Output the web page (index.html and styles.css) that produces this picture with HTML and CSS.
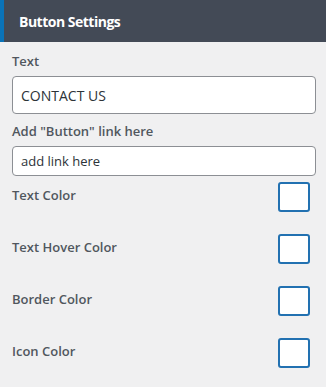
FILE: index.html
```html
<!DOCTYPE html>
<html lang="en">
<head>
    <meta charset="UTF-8">
    <meta name="viewport" content="width=device-width, initial-scale=1.0">
    <title>Button Settings</title>
    <link rel="stylesheet" href="styles.css">
</head>
<body>
    <div class="panel">
        <div class="panel-header">Button Settings</div>
        <div class="panel-body">
            <div class="field">
                <label class="field-label" for="btnText">Text</label>
                <input class="text-input big" type="text" id="btnText" value="CONTACT US">
            </div>
            <div class="field">
                <label class="field-label" for="btnLink">Add "Button" link here</label>
                <input class="text-input" type="text" id="btnLink" placeholder="add link here">
            </div>
            <div class="color-row">
                <span class="field-label">Text Color</span>
                <button class="swatch"></button>
            </div>
            <div class="color-row">
                <span class="field-label">Text Hover Color</span>
                <button class="swatch"></button>
            </div>
            <div class="color-row">
                <span class="field-label">Border Color</span>
                <button class="swatch"></button>
            </div>
            <div class="color-row">
                <span class="field-label">Icon Color</span>
                <button class="swatch"></button>
            </div>
        </div>
    </div>
</body>
</html>
```

FILE: styles.css
```css
body {
    margin: 0;
    font-family: "Open Sans", "Noto Sans", sans-serif;
    background: #f0f0f1;
    color: #50575e;
}
.panel {
    width: 326px;
}
.panel-header {
    height: 42px;
    box-sizing: border-box;
    display: flex;
    align-items: center;
    padding-left: 15px;
    background: #434a56;
    border-left: 4px solid #0a73b8;
    color: #fff;
    font-size: 14px;
    font-weight: 700;
    letter-spacing: -0.5px;
}
.panel-body {
    padding: 10px 10px 0 12px;
}
.field {
    display: flex;
    flex-direction: column;
    margin-bottom: 8px;
}
.field-label {
    font-size: 13px;
    font-weight: 600;
    line-height: 18px;
    color: #50575e;
}
.field .field-label {
    margin-bottom: 6px;
}
.text-input {
    box-sizing: border-box;
    height: 30px;
    padding: 0 8px;
    border: 1px solid #8c8f94;
    border-radius: 4px;
    background: #fff;
    font-family: inherit;
    font-size: 13px;
    color: #2c3338;
}
.text-input::placeholder {
    color: #2c3338;
}
.text-input.big {
    height: 38px;
    font-size: 14px;
}
.field + .color-row {
    margin-top: -2px;
}
.color-row {
    display: flex;
    justify-content: space-between;
    align-items: center;
    height: 30px;
    margin-bottom: 22px;
}
.color-row .field-label {
    padding-bottom: 4px;
}
.swatch {
    box-sizing: border-box;
    width: 32px;
    height: 30px;
    margin-right: 6px;
    padding: 0;
    border: 2px solid #2271b1;
    border-radius: 3px;
    background: #fff;
}
```
